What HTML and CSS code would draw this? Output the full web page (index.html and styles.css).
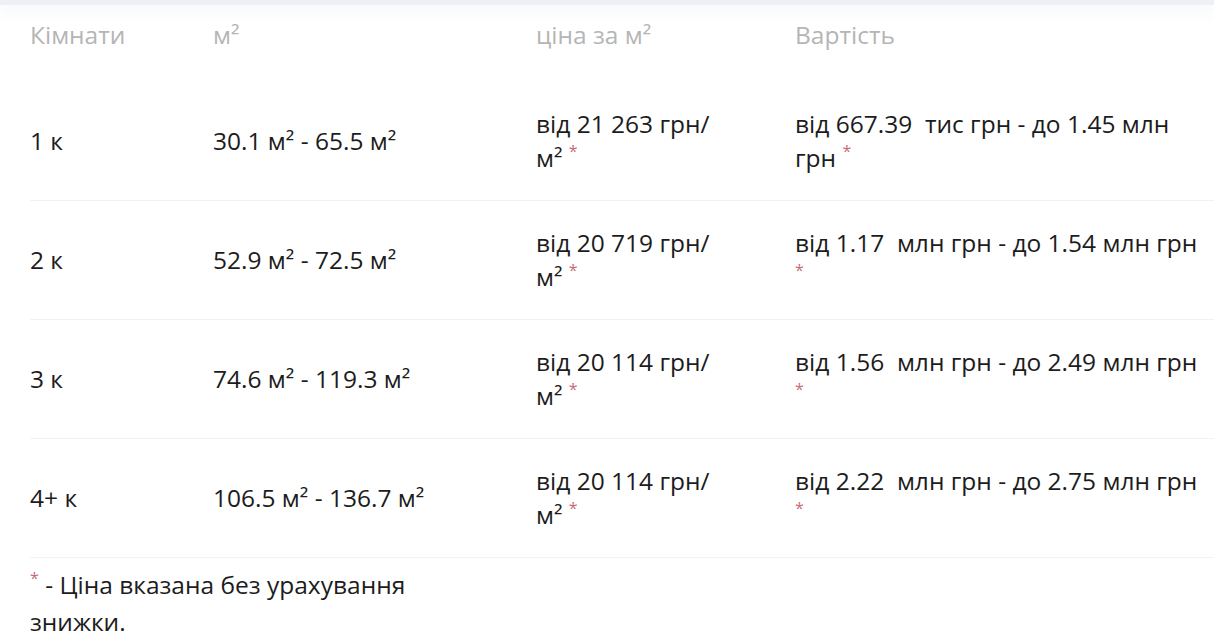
FILE: index.html
```html
<!DOCTYPE html>
<html lang="uk">
<head>
<meta charset="utf-8">
<link rel="stylesheet" href="styles.css">
</head>
<body>
<div class="topbar"></div>
<div class="table">
  <div class="row head">
    <div class="cell c1">Кімнати</div>
    <div class="cell c2">м²</div>
    <div class="cell c3">ціна за м²</div>
    <div class="cell c4">Вартість</div>
  </div>
  <div class="row">
    <div class="cell c1">1 к</div>
    <div class="cell c2">30.1 м² - 65.5 м²</div>
    <div class="cell c3">від 21 263 грн/<wbr>м² <sup class="star">*</sup></div>
    <div class="cell c4">від 667.39&nbsp; тис грн - до 1.45 млн грн <sup class="star">*</sup></div>
  </div>
  <div class="row">
    <div class="cell c1">2 к</div>
    <div class="cell c2">52.9 м² - 72.5 м²</div>
    <div class="cell c3">від 20 719 грн/<wbr>м² <sup class="star">*</sup></div>
    <div class="cell c4">від 1.17&nbsp; млн грн - до 1.54 млн грн <sup class="star">*</sup></div>
  </div>
  <div class="row">
    <div class="cell c1">3 к</div>
    <div class="cell c2">74.6 м² - 119.3 м²</div>
    <div class="cell c3">від 20 114 грн/<wbr>м² <sup class="star">*</sup></div>
    <div class="cell c4">від 1.56&nbsp; млн грн - до 2.49 млн грн <sup class="star">*</sup></div>
  </div>
  <div class="row">
    <div class="cell c1">4+ к</div>
    <div class="cell c2">106.5 м² - 136.7 м²</div>
    <div class="cell c3">від 20 114 грн/<wbr>м² <sup class="star">*</sup></div>
    <div class="cell c4">від 2.22&nbsp; млн грн - до 2.75 млн грн <sup class="star">*</sup></div>
  </div>
</div>
<p class="note"><sup class="star">*</sup> - Ціна вказана без урахування знижки.</p>
</body>
</html>
```
FILE: styles.css
```css
html, body {
  margin: 0;
  padding: 0;
  background: #ffffff;
}
body {
  font-family: "Open Sans", "Noto Sans", sans-serif;
  font-size: 24.5px;
  color: #1c1c1c;
  width: 1214px;
  overflow: hidden;
}
.topbar {
  height: 5px;
  background: #eef0f5;
  box-shadow: 0 4px 16px rgba(220, 224, 236, 0.6);
}
.table {
  padding-left: 30px;
}
.row {
  display: grid;
  grid-template-columns: 183px 323px 259px 1fr;
  align-items: center;
  height: 118px;
  border-bottom: 1px solid #f2f2f2;
  line-height: 34px;
}
.row.head {
  height: 60px;
  border-bottom: none;
  color: #b5b5b5;
  margin-bottom: 17px;
}
.cell.c3 {
  padding-right: 72px;
}
.cell.c4 {
  padding-right: 12px;
}
.star {
  display: inline-block;
  color: #c86b7a;
  font-size: 16px;
  line-height: 12px;
  vertical-align: 10px;
}
.note {
  margin: 0;
  padding: 8px 0 0 30px;
  width: 390px;
  line-height: 37px;
}
```
